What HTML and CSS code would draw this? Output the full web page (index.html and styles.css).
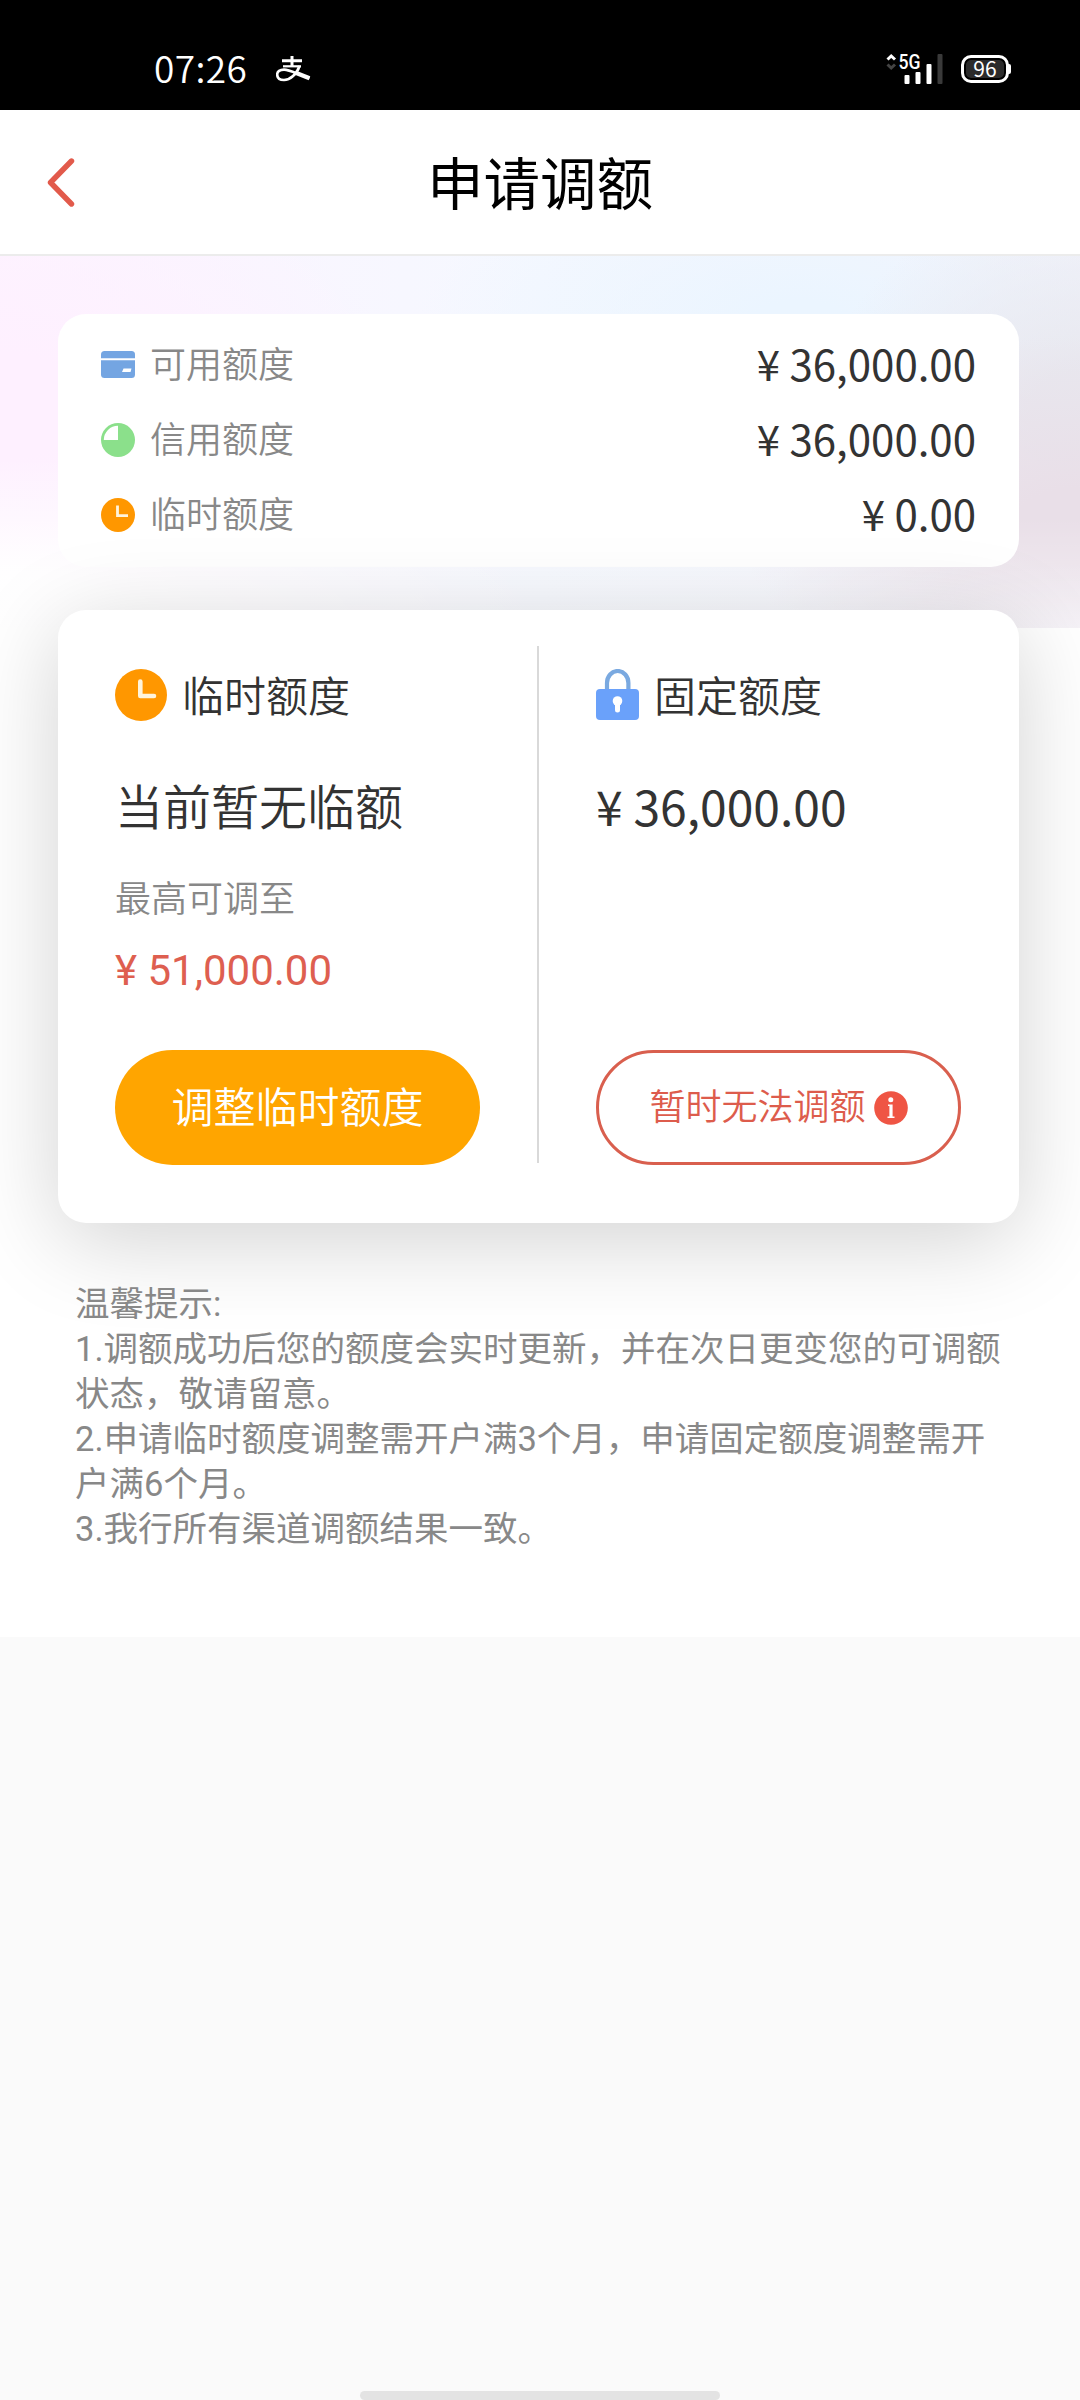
FILE: index.html
```html
<!DOCTYPE html>
<html lang="zh-CN">
<head>
<meta charset="utf-8">
<title>申请调额</title>
<link rel="stylesheet" href="styles.css">
</head>
<body>
<div class="statusbar">
  <span class="clock">07:26</span>
  <svg class="pay" width="35" height="26" viewBox="0 0 35 26" fill="none" stroke="#fff">
    <path d="M6 4.8H26M16 0V10" stroke-width="3"/>
    <path d="M7 10.3H25" stroke-width="2.2"/>
    <path d="M23.5 10C21 18 14 24 8 24C3 24 1.2 21.5 1.2 18.5C1.2 15.5 4 13.6 8 13.6C14 13.6 21 18 33.5 22" stroke-width="2.6"/>
    <path d="M19 16.5L33.5 22.2" stroke-width="4.2"/>
  </svg>
  <svg class="signal" width="58" height="34" viewBox="0 -1 58 34">
    <path d="M1.5 6.5L5.2 3L9 6.5" fill="none" stroke="#fff" stroke-width="3"/>
    <path d="M1.5 11.5L5.2 15L9 11.5" fill="none" stroke="#444" stroke-width="3"/>
    <text class="net" x="12.5" y="16" textLength="22" lengthAdjust="spacingAndGlyphs">5G</text>
    <rect x="18.5" y="22" width="5" height="9" rx="1" fill="#fff"/>
    <rect x="29.5" y="19" width="5" height="12" rx="1" fill="#fff"/>
    <rect x="40.5" y="11" width="5" height="20" rx="1" fill="#fff"/>
    <rect x="51.5" y="1" width="5" height="30" rx="1" fill="#3a3a3a"/>
  </svg>
  <div class="battery"><span class="level">96</span></div>
</div>

<header class="navbar">
  <svg class="back" width="30" height="50" viewBox="0 0 30 50" fill="none" stroke="#e25a4b" stroke-width="5.4" stroke-linecap="round" stroke-linejoin="round"><path d="M26.500 4L5.500 25.500L26.500 47"/></svg>
  <h1 class="title">申请调额</h1>
</header>

<main class="page">
  <section class="hero">
    <div class="summary">
      <div class="row">
        <svg width="34" height="34" viewBox="0 0 34 34"><rect y="3" width="34" height="27" rx="3.500" fill="#74a5e2"/><path d="M0 11.200H34" stroke="#fff" stroke-width="2"/><path d="M22.500 20.500H30.500L29.500 24H21Z" fill="#fff"/></svg>
        <span class="label">可用额度</span><span class="amount">¥ 36,000.00</span>
      </div>
      <div class="row">
        <svg width="34" height="34" viewBox="0 0 34 34"><circle cx="17" cy="17" r="17" fill="#8be08b"/><path d="M17 2.800V17H2.800A14.200 14.200 0 0 1 17 2.800Z" fill="#fff"/></svg>
        <span class="label">信用额度</span><span class="amount">¥ 36,000.00</span>
      </div>
      <div class="row">
        <svg width="34" height="34" viewBox="0 0 34 34"><circle cx="17" cy="17" r="17" fill="#ff9700"/><path d="M16.500 7.500V17.700H27" fill="none" stroke="#fff4dc" stroke-width="2.800"/></svg>
        <span class="label">临时额度</span><span class="amount">¥ 0.00</span>
      </div>
    </div>
  </section>

  <section class="limits">
    <div class="col">
      <div class="head">
        <svg width="52" height="52" viewBox="0 0 52 52"><circle cx="26" cy="26" r="26" fill="#ff9700"/><path d="M25.300 12.500V27H39" fill="none" stroke="#fff4dc" stroke-width="4.600" stroke-linecap="round" stroke-linejoin="round"/></svg>
        <h2 class="name">临时额度</h2>
      </div>
      <div class="value status">当前暂无临额</div>
      <div class="hint">最高可调至</div>
      <div class="max">¥ 51,000.00</div>
      <button class="btn primary"><span class="caption">调整临时额度</span></button>
    </div>
    <div class="divider"></div>
    <div class="col">
      <div class="head">
        <svg width="43" height="52" viewBox="0 0 43 52"><path d="M11 21V14A10.700 12 0 0 1 32.400 14V21" fill="none" stroke="#7aa9e0" stroke-width="4.200"/><rect y="20" width="43" height="31" rx="4" fill="#6aa1fa"/><circle cx="21.500" cy="32" r="4.800" fill="#fff"/><path d="M21.500 33V41" stroke="#fff" stroke-width="5" stroke-linecap="round"/></svg>
        <h2 class="name">固定额度</h2>
      </div>
      <div class="value">¥ 36,000.00</div>
      <button class="btn outline"><span class="caption">暂时无法调额</span>
        <svg width="34" height="34" viewBox="0 0 34 34"><circle cx="17" cy="17" r="16.800" fill="#ef5544"/><circle cx="16.800" cy="8.700" r="2.500" fill="#fff"/><path d="M14 13.500H18.600V25.500H20.500V27H13.500V25.500H15.400V15H14Z" fill="#fff"/></svg>
      </button>
    </div>
  </section>

  <section class="tips">
    <p>温馨提示:</p>
    <p>1.调额成功后您的额度会实时更新，并在次日更变您的可调额<br>状态，敬请留意。</p>
    <p>2.申请临时额度调整需开户满3个月，申请固定额度调整需开<br>户满6个月。</p>
    <p>3.我行所有渠道调额结果一致。</p>
  </section>
</main>
<div class="homebar"></div>
</body>
</html>
```
FILE: styles.css
```css
* { box-sizing: border-box; }

body {
  margin: 0;
  width: 1080px;
  height: 2400px;
  display: flex;
  flex-direction: column;
  background: #fafafa;
  color: #333;
  font-family: "Noto Sans CJK SC", sans-serif;
  overflow: hidden;
}

h1, h2, p { margin: 0; font-weight: 400; }
svg { display: block; flex: none; }

.statusbar {
  height: 110px;
  flex: none;
  display: flex;
  align-items: center;
  padding: 28px 71px 0 154px;
  background: #000;
  color: #fff;
}
.clock { font-size: 37px; line-height: 40px; font-weight: 350; width: 122px; padding-bottom: 5px; letter-spacing: .4px; }
.signal { margin-left: auto; overflow: visible; }
.net { font: 500 20px Roboto, sans-serif; fill: #fff; }
.battery {
  position: relative;
  width: 48px;
  height: 28px;
  margin-left: 17px;
  border: 3px solid #fff;
  border-radius: 10px;
  background: #2b2b2b;
  box-shadow: inset 0 0 0 2px #000;
  display: flex;
  align-items: center;
  justify-content: center;
}
.battery::after {
  content: "";
  position: absolute;
  right: -5px;
  top: 6px;
  width: 3px;
  height: 10px;
  border-radius: 0 2px 2px 0;
  background: #fff;
}
.level { font-size: 21px; line-height: 22px; padding-bottom: 2px; }

.navbar {
  height: 146px;
  flex: none;
  display: grid;
  grid-template-columns: 80px 1fr 80px;
  align-items: center;
  padding: 0 45px;
  border-bottom: 2px solid #ececec;
  background: #fff;
}
.title { text-align: center; font-size: 56.5px; line-height: 80px; padding-bottom: 4px; color: #000; }

.page {
  height: 1381px;
  flex: none;
  background: #fff;
}
.hero {
  height: 372px;
  padding: 58px 61px 0 58px;
  background:
    radial-gradient(ellipse 560px 170px at 0 372px, rgba(255,255,255,.95) 30%, rgba(255,255,255,0) 100%),
    linear-gradient(to bottom, rgba(255,255,255,0) 70%, rgba(255,255,255,.45) 100%),
    radial-gradient(ellipse 340px 190px at 1080px 270px, #e9dfe8 20%, rgba(236,223,234,0) 100%),
    radial-gradient(ellipse 260px 220px at 1080px 160px, #e8e8ef 20%, rgba(233,233,240,0) 100%),
    radial-gradient(ellipse 400px 260px at 0 150px, #fef0ff 20%, rgba(253,239,254,0) 100%),
    radial-gradient(ellipse 380px 150px at 800px 60px, #ebf5ff 10%, rgba(236,244,255,0) 100%),
    linear-gradient(to right, #fdf4ff, #f5f8ff 50%, #f3f3fb);
}
.summary {
  height: 253px;
  border-radius: 28px;
  padding: 13px 43px 0;
  background: #fff;
}
.row { height: 75px; display: flex; align-items: center; }
.label { margin-left: 15px; font-size: 36px; line-height: 50px; padding-bottom: 5px; color: #888; font-weight: 350; }
.amount { margin-left: auto; font-size: 42px; line-height: 60px; padding-bottom: 3px; }

.limits {
  position: relative;
  height: 613px;
  margin: -18px 61px 0 58px;
  padding: 36px 57px 58px;
  display: grid;
  grid-template-columns: 365px 116px 365px;
  border-radius: 28px;
  background: #fff;
  box-shadow: 0 17px 92px rgba(0, 0, 0, .18);
}
.col { display: flex; flex-direction: column; align-items: flex-start; }
.divider { width: 2px; height: 517px; margin: 0 auto; background: #d9d9d9; }
.head { display: flex; align-items: center; height: 98px; gap: 15px; }
.name { font-size: 42px; line-height: 60px; font-weight: 350; padding-bottom: 2px; }
.value { margin-top: 26px; font-size: 48px; line-height: 70px; }
.status { margin-top: 25px; margin-bottom: 1px; font-weight: 350; }
.hint { margin-top: 30px; font-size: 36px; line-height: 52px; color: #888; font-weight: 350; }
.max { margin-top: 24px; font: 42px/50px Roboto, sans-serif; color: #de5f50; }
.btn {
  width: 365px;
  height: 115px;
  margin-top: auto;
  padding: 0;
  display: flex;
  align-items: center;
  justify-content: center;
  border: 0;
  border-radius: 58px;
  font-family: inherit;
  font-weight: 350;
}
.caption { padding-bottom: 7px; }
.primary { background: #ffa500; color: #fff; font-size: 42px; }
.outline {
  gap: 8px;
  border: 3px solid #d95f4e;
  background: #fff;
  color: #dd5c4c;
  font-size: 36px;
}

.tips {
  position: relative;
  padding: 59px 60px 0 75px;
  font: 350 34.5px/45px Roboto, "Noto Sans CJK SC", sans-serif;
  color: #888;
  white-space: nowrap;
}

.homebar {
  width: 360px;
  height: 9px;
  margin: auto auto 0;
  border-radius: 5px;
  background: #e3e3e3;
}
```
